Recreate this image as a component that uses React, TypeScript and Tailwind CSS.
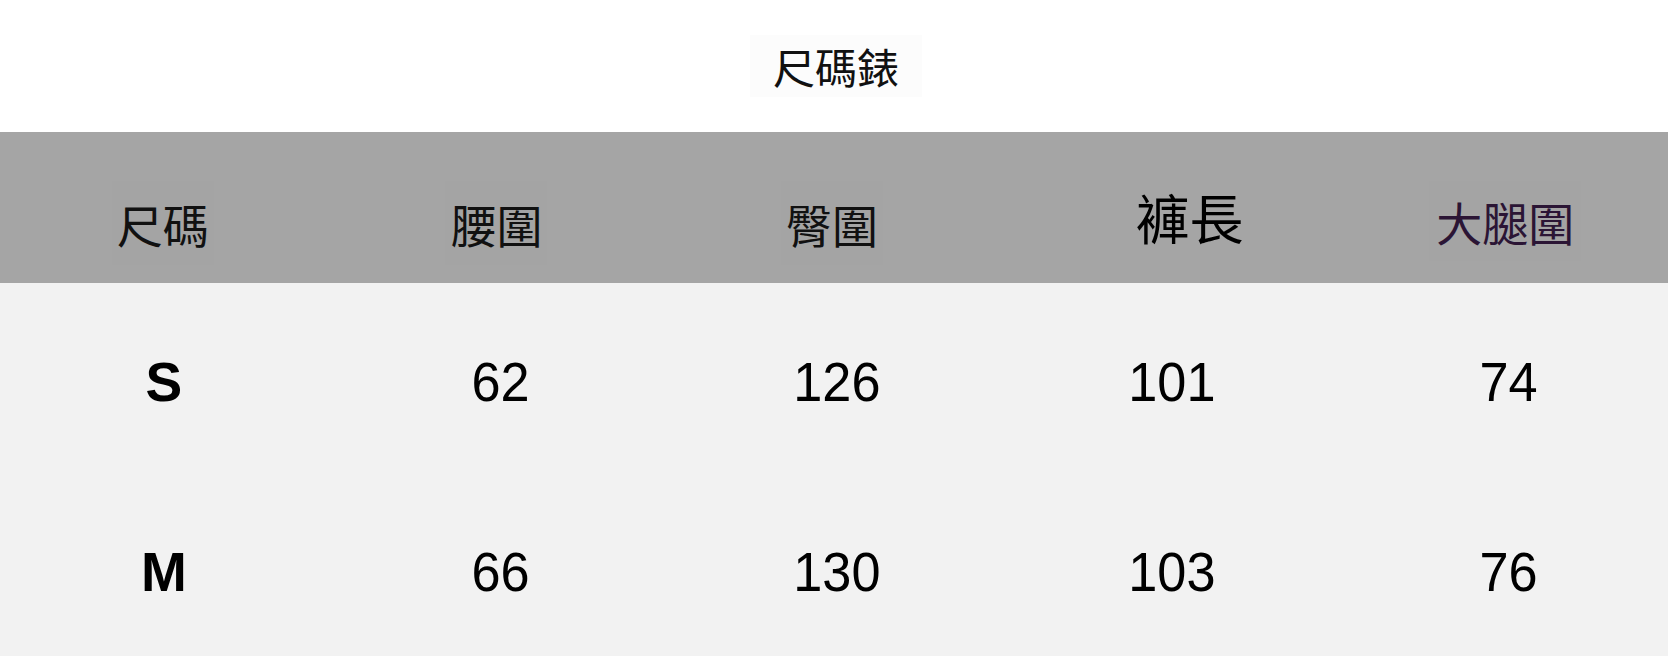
export default function App() {
  const cjk = { fontFamily: '"Noto Sans CJK TC", "Noto Sans CJK SC", sans-serif' };
  const latin = { fontFamily: '"Liberation Sans", Arial, sans-serif' };

  const rows = [
    ["S", "62", "126", "101", "74"],
    ["M", "66", "130", "103", "76"],
  ];

  return (
    <div className="w-[1668px] h-[656px] overflow-hidden bg-white flex flex-col">
      {/* Title */}
      <div className="h-[132px] shrink-0 flex justify-center pt-[35px] pl-[4px]">
        <div
          className="w-[172px] h-[62px] bg-[#fcfcfc] flex items-center justify-center text-[42px] leading-none text-[#111]"
          style={cjk}
        >
          尺碼錶
        </div>
      </div>

      {/* Header band */}
      <div className="h-[151px] shrink-0 bg-[#a5a5a5] grid grid-cols-5 items-center pt-[30px]" style={cjk}>
        <div className="flex justify-center pr-[8px]">
          <span className="bg-[#a4a4a4] px-[5px] py-[19px] text-[46px] leading-none text-[#111]">尺碼</span>
        </div>
        <div className="flex justify-center pr-[8px]">
          <span className="bg-[#a4a4a4] px-[5px] py-[19px] text-[46px] leading-none text-[#111]">腰圍</span>
        </div>
        <div className="flex justify-center pr-[4px]">
          <span className="bg-[#a4a4a4] px-[5px] py-[19px] text-[46px] leading-none text-[#111]">臀圍</span>
        </div>
        <div className="flex justify-center pl-[44px] pb-[12px]">
          <span className="px-[4px] py-[10px] text-[54px] leading-none text-black">褲長</span>
        </div>
        <div className="flex justify-center pl-[8px] pb-[4px]">
          <span className="bg-[#a4a4a4] px-[7px] py-[17px] text-[46px] leading-none text-[#2b1535]">大腿圍</span>
        </div>
      </div>

      {/* Body */}
      <div className="flex-1 bg-[#f2f2f2] pt-[4px]" style={latin}>
        {rows.map((r) => (
          <div key={r[0]} className="h-[190px] grid grid-cols-5 items-center text-[55px] leading-none text-black">
            <div className="text-center font-bold pr-[6px]">{r[0]}</div>
            <div className="text-center">
              <span className="inline-block scale-x-95">{r[1]}</span>
            </div>
            <div className="text-center pl-[5px]">
              <span className="inline-block scale-x-95">{r[2]}</span>
            </div>
            <div className="text-center pl-[8px]">
              <span className="inline-block scale-x-95">{r[3]}</span>
            </div>
            <div className="text-center pl-[14px]">
              <span className="inline-block scale-x-95">{r[4]}</span>
            </div>
          </div>
        ))}
      </div>
    </div>
  );
}
